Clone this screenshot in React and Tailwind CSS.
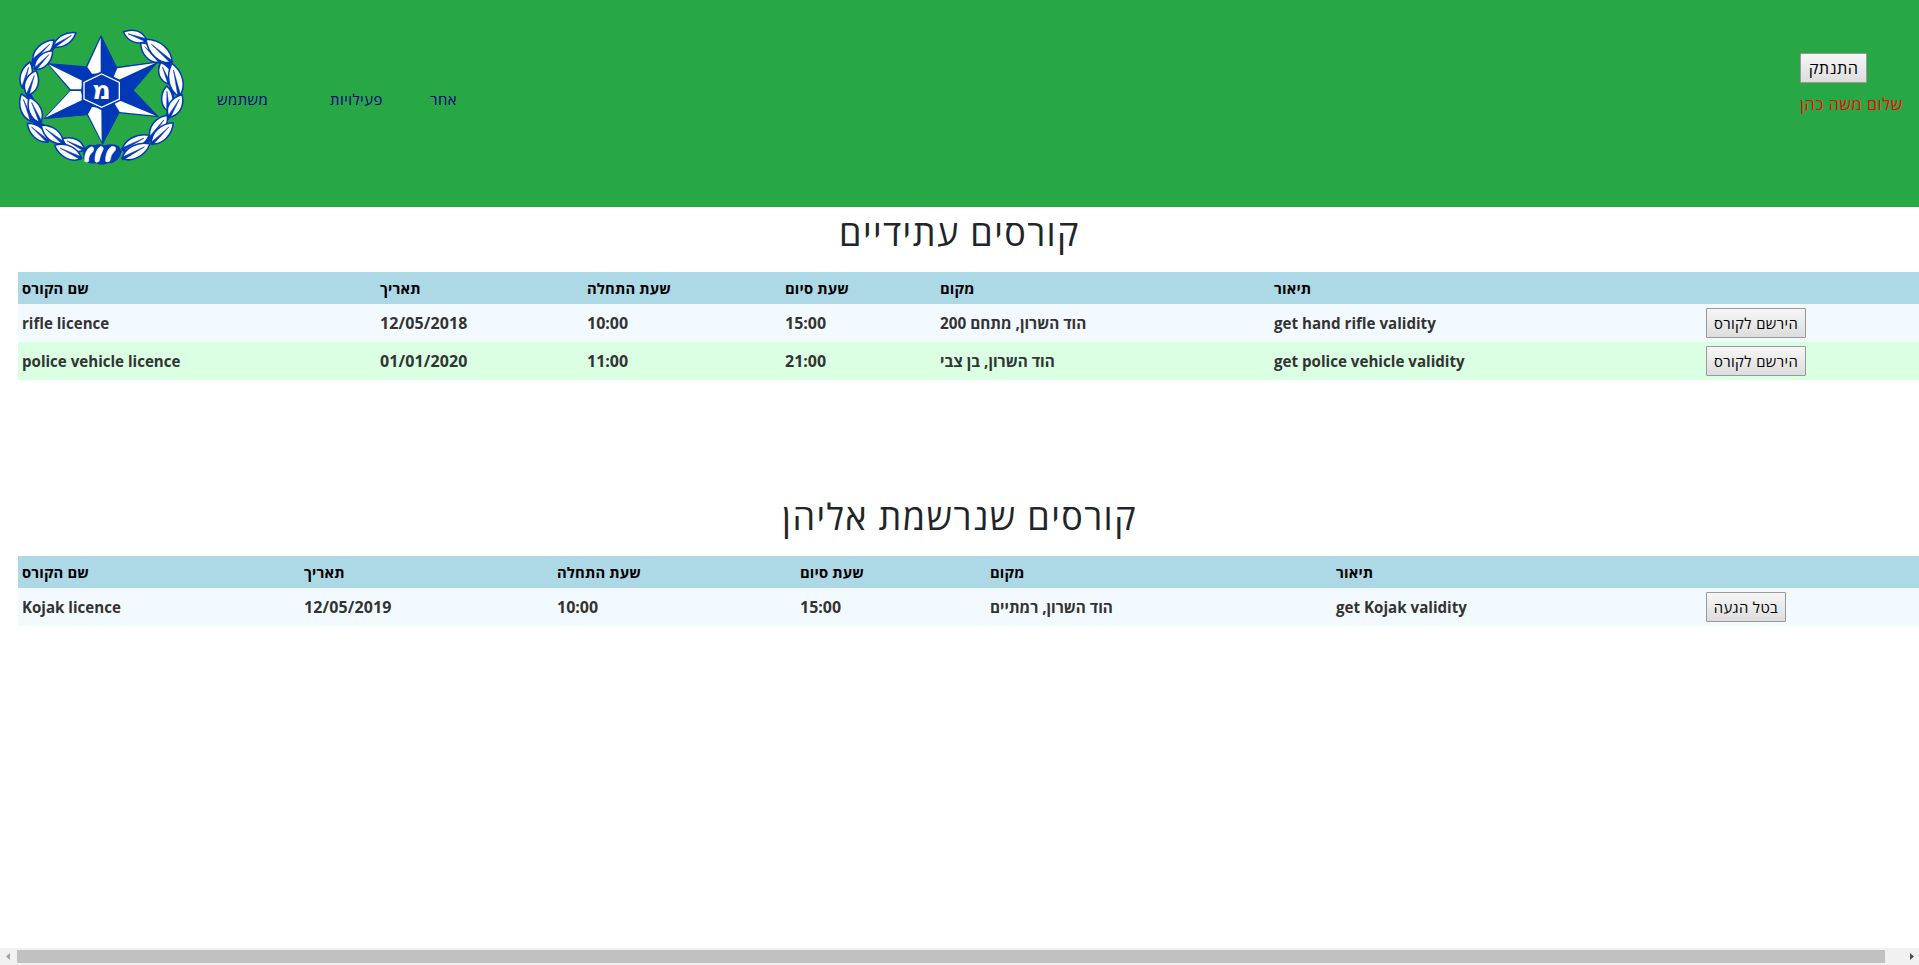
const BLUE = '#0038b8';

// Each leaf: base x, base y, tip x, tip y, width
const leaves = [
  [160, 110, 228, 68, 34],
  [98, 152, 162, 90, 40], [104, 178, 158, 122, 38],
  [68, 235, 90, 156, 38], [82, 256, 108, 182, 44],
  [96, 335, 64, 252, 42], [122, 338, 88, 262, 40],
  [145, 396, 82, 340, 38], [190, 400, 124, 346, 40],
  [254, 420, 188, 386, 38], [244, 446, 164, 406, 42],
  [440, 92, 370, 66, 38],
  [482, 158, 422, 98, 42], [516, 158, 438, 88, 48],
  [508, 222, 482, 158, 40], [538, 260, 516, 160, 46],
  [504, 304, 500, 228, 38], [506, 322, 546, 254, 42],
  [450, 384, 502, 316, 42], [454, 402, 520, 338, 42],
  [366, 418, 448, 376, 38], [366, 446, 450, 402, 42],
];

function Leaf({ x1, y1, x2, y2, w }) {
  const length = Math.hypot(x2 - x1, y2 - y1);
  const angle = (Math.atan2(y2 - y1, x2 - x1) * 180) / Math.PI;
  const h = w / 2;
  return (
    <g transform={`translate(${x1} ${y1}) rotate(${angle})`}>
      <path
        d={`M0 0C${length * 0.25} ${-h * 1.25} ${length * 0.7} ${-h * 1.15} ${length} 0C${length * 0.7} ${h * 1.15} ${length * 0.25} ${h * 1.25} 0 0Z`}
        fill="#fff"
        stroke={BLUE}
        strokeWidth="4.5"
        strokeLinejoin="round"
      />
      <path d={`M0 -4L${length * 0.8} 0L0 5Z`} fill={BLUE} stroke={BLUE} strokeWidth="1.5" />
    </g>
  );
}

function Emblem() {
  return (
    <svg className="block h-[200px] w-[200px]" viewBox="0 0 600 600">
      <path
        d="M165 104L130 140L92 165L90 200L84 250L98 275L104 335L145 360L195 400L240 425M440 92L470 125L505 165L518 200L515 250L515 290L500 325L470 365L440 395L370 425"
        fill="none"
        stroke={BLUE}
        strokeWidth="15"
        strokeLinejoin="round"
      />
      {leaves.map(([x1, y1, x2, y2, w], i) => (
        <Leaf key={i} x1={x1} y1={y1} x2={x2} y2={y2} w={w} />
      ))}
      <path
        d="M303 77L350 172L473 156L400 241L475 320L357 308L308 402L262 314L132 326L211 241L143 161L259 170Z"
        fill={BLUE}
        stroke={BLUE}
        strokeWidth="3"
        strokeLinejoin="round"
      />
      <g fill="#fff">
        <path d="M302 84V190L276 191L262 171Z" />
        <path d="M146 163L250 214L244 238H212Z" />
        <path d="M136 323L211 243H242L251 268Z" />
        <path d="M264 313L276 291L304 293L305 394Z" />
        <path d="M468 317L359 306L343 280L357 271Z" />
        <path d="M466 159L352 175L341 200L357 209Z" />
      </g>
      <path d="M305 184L365 212V271L305 301L245 271V212Z" fill={BLUE} />
      <path d="M305 192L358 217V267L305 292L252 267V217Z" fill={BLUE} stroke="#fff" strokeWidth="4" />
      <text
        x="304"
        y="266"
        textAnchor="middle"
        fontSize="78"
        fontWeight="700"
        fill="#fff"
        className="font-['DejaVu_Sans',sans-serif]"
      >
        מ
      </text>
      <path d="M250 420Q262 400 282 406Q300 400 314 406Q340 398 356 408L366 424Q354 462 325 460Q305 468 288 460Q262 464 250 446Z" fill={BLUE} />
      <g fill="#fff" stroke="#fff" strokeLinejoin="round" strokeWidth="2">
        <path d="M254 454Q252 420 274 410Q286 412 278 426Q264 436 266 454Q260 458 254 454Z" />
        <path d="M285 454Q284 422 300 410Q310 408 310 416Q300 436 297 454Q290 460 285 454Z" />
        <path d="M317 454Q316 422 334 410Q350 408 346 420Q330 436 330 452Q324 458 317 454Z" />
      </g>
    </svg>
  );
}

function CourseButton({ children, className }) {
  return (
    <button
      className={`block h-[30px] rounded-[1px] border border-[#999] bg-linear-to-b from-[#f6f6f6] to-[#dddddd] text-center whitespace-nowrap text-black ${className}`}
    >
      {children}
    </button>
  );
}

const headers = ['שם הקורס', 'תאריך', 'שעת התחלה', 'שעת סיום', 'מקום', 'תיאור', ''];

const cellStyles = [
  'text-[15.1px]',
  'text-[16px] tracking-[0.1px]',
  'text-[16px]',
  'text-[16px]',
  'text-[15.3px]',
  'text-[15.15px]',
];

function CourseTable({ columns, rows, action, buttonClass }) {
  return (
    <div className="ml-[18px] font-bold whitespace-nowrap">
      <div className={`grid h-8 items-center bg-[#add8e6] pt-px text-[14.8px] tracking-[0.15px] text-black ${columns}`}>
        {headers.map((h, i) => (
          <div key={i} className="pl-1">{h}</div>
        ))}
      </div>
      {rows.map((row, i) => (
        <div
          key={i}
          className={`grid h-[38px] items-center text-[#333] ${i % 2 ? 'bg-[#daffe3]' : 'bg-[#f3faff]'} ${columns}`}
        >
          {row.map((cell, j) => (
            <div key={j} className={`pl-1 leading-6 ${cellStyles[j]}`}>{cell}</div>
          ))}
          <div className="pl-1">
            <CourseButton className={buttonClass}>{action}</CourseButton>
          </div>
        </div>
      ))}
    </div>
  );
}

export default function App() {
  return (
    <div className="flex h-[965px] w-full flex-col overflow-hidden bg-white font-['Open_Sans','Noto_Sans',sans-serif] text-[#212529]">
      <header className="flex h-[207px] shrink-0 bg-[#28a745] pt-[10px]">
        <Emblem />
        <nav className="flex pt-[77px] pl-[17px] text-[14.8px] leading-6 tracking-[0.5px] whitespace-nowrap text-[#000080]">
          <a className="w-[113px]">משתמש</a>
          <a className="w-[100px]">פעילויות</a>
          <a>אחר</a>
        </nav>
        <div className="mr-[15px] ml-auto w-[104px] pt-[43px]">
          <CourseButton className="w-[67px] pt-px text-[16.3px] font-medium tracking-[0.4px]">התנתק</CourseButton>
          <p className="mt-[9px] text-[16.2px] leading-6 font-medium tracking-[0.6px] whitespace-nowrap text-[#ff0000]">שלום משה כהן</p>
        </div>
      </header>
      <main className="flex-1">
        <h1 className="mb-[17px] h-12 pt-[2px] text-center text-[36px] leading-[48px] tracking-[1.4px]">קורסים עתידיים</h1>
        <CourseTable
          columns="grid-cols-[358px_207px_198px_155px_334px_432px_1fr]"
          action="הירשם לקורס"
          buttonClass="w-[100px] text-[14.8px] tracking-[0.4px] font-normal"
          rows={[
            ['rifle licence', '12/05/2018', '10:00', '15:00', 'הוד השרון, מתחם 200', 'get hand rifle validity'],
            ['police vehicle licence', '01/01/2020', '11:00', '21:00', 'הוד השרון, בן צבי', 'get police vehicle validity'],
          ]}
        />
        <h1 className="mt-[111px] mb-[17px] h-12 pt-[2px] text-center text-[36px] leading-[48px] tracking-[1.4px]">קורסים שנרשמת אליהן</h1>
        <CourseTable
          columns="grid-cols-[282px_253px_243px_190px_346px_370px_1fr]"
          action="בטל הגעה"
          buttonClass="w-[80px] text-[14.8px] tracking-[0.4px] font-normal"
          rows={[['Kojak licence', '12/05/2019', '10:00', '15:00', 'הוד השרון, רמתיים', 'get Kojak validity']]}
        />
      </main>
      <div className="flex h-[17px] shrink-0 items-center justify-between bg-[#f1f1f1]">
        <svg className="h-[17px] w-[17px]" viewBox="0 0 17 17"><path d="M10 5V12L6 8.5Z" fill="#a3a3a3" /></svg>
        <div className="mr-auto h-[13px] w-[1868px] bg-[#c1c1c1]" />
        <svg className="h-[17px] w-[17px]" viewBox="0 0 17 17"><path d="M8 5V12L12 8.5Z" fill="#505050" /></svg>
      </div>
    </div>
  );
}
